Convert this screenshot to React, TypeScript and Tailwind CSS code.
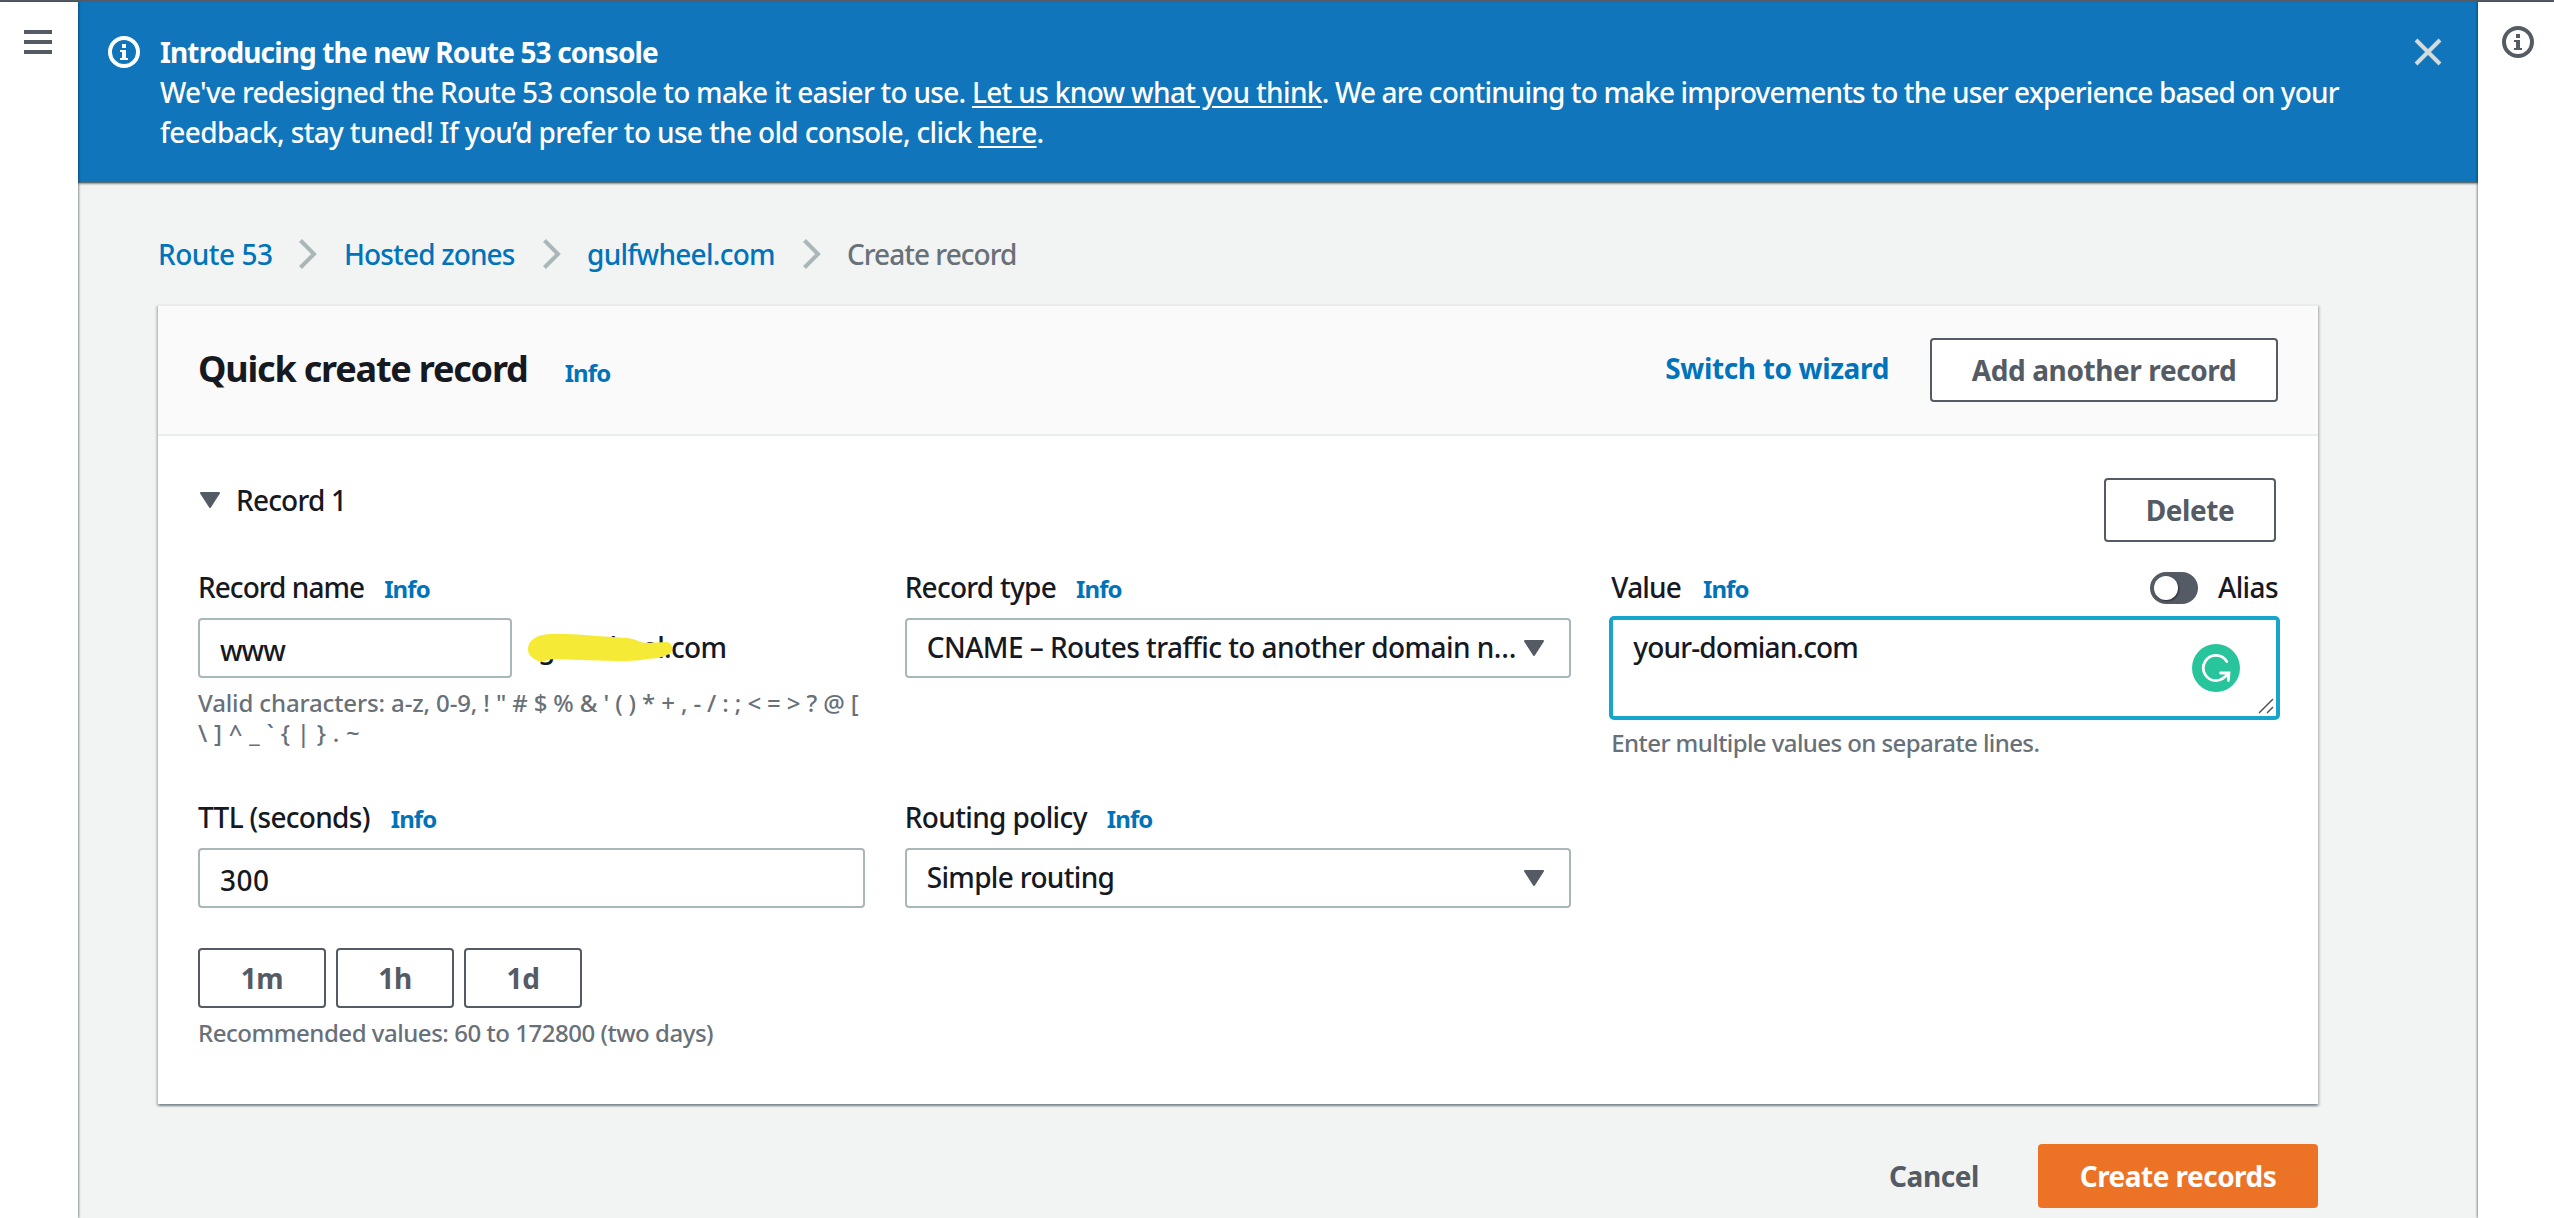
import React from "react";

function InfoIcon({ className }: { className: string }) {
  return (
    <svg viewBox="0 0 32 32" className={className} fill="none">
      <circle cx="16" cy="16" r="14" stroke="currentColor" strokeWidth="4" />
      <path d="M14 8h4v4h-4zM12 14h6v8h2v2h-8v-2h2v-6h-2z" fill="currentColor" />
    </svg>
  );
}

function Caret({ className = "" }: { className?: string }) {
  return (
    <svg viewBox="0 0 20 16" className={`h-4 w-5 shrink-0 text-[#545b64] ${className}`}>
      <path d="M1 1h18l-9 14z" fill="currentColor" stroke="currentColor" strokeWidth="2" strokeLinejoin="round" />
    </svg>
  );
}

function Chevron({ className }: { className: string }) {
  return (
    <svg viewBox="0 0 18 30" className={`h-[30px] w-[18px] shrink-0 ${className}`} fill="none">
      <path d="M1.5 1.5l13.500 13.500L1.500 28.500" stroke="#aab7b8" strokeWidth="4" />
    </svg>
  );
}

function Label({ text, className, info }: { text: string; className: string; info: string }) {
  return (
    <div className="flex h-10 items-baseline leading-10">
      <span className={`whitespace-nowrap ${className}`}>{text}</span>
      <a className={`text-[24px] font-bold tracking-[-0.9px] text-[#0073bb] ${info}`}>Info</a>
    </div>
  );
}

const field = "mt-[11px] flex h-[60px] items-center rounded-[4px] border-2 border-[#aab7b8] bg-white pl-5";
const hint = "mt-2.5 whitespace-nowrap text-[24px] leading-[30px] text-[#687078]";
const outline = "flex items-center justify-center rounded-[4px] border-2 border-[#545b64] bg-white font-bold tracking-[-0.4px] text-[#545b64]";

function Banner() {
  return (
    <div className="relative z-10 flex h-[180px] bg-[#1075bb] text-white shadow-[0_2px_2px_rgba(0,28,36,0.4),0_1px_1px_rgba(0,28,36,0.4)]">
      <InfoIcon className="ml-[30px] mt-[34px] size-8 shrink-0" />
      <div className="ml-5 mt-[30px] w-[2254px] whitespace-nowrap leading-10">
        <div className="font-bold tracking-[-0.86px]">Introducing the new Route 53 console</div>
        <div className="tracking-[-0.74px]">
          We've redesigned the Route 53 console to make it easier to use.{" "}
          <a className="tracking-[-0.66px] underline decoration-2 underline-offset-[3px]">Let us know what you think</a>
          <span className="tracking-[-0.86px]">. We are continuing to make improvements to the user experience based on your</span>
        </div>
        <div className="tracking-[-0.65px]">
          feedback, stay tuned! If you’d prefer to use the old console, click{" "}
          <a className="underline decoration-2 underline-offset-[3px]">here</a>.
        </div>
      </div>
      <svg viewBox="0 0 28 28" className="mt-[36px] size-7 text-[#d5dbdb]" fill="none">
        <path d="M2 2l24 24M26 2L2 26" stroke="currentColor" strokeWidth="4" />
      </svg>
    </div>
  );
}

function Breadcrumbs() {
  return (
    <nav className="mt-[51px] flex h-10 items-center whitespace-nowrap leading-10 text-[#0073bb]">
      <a className="mt-0.5 w-[141px] tracking-[-0.5px]">Route 53</a>
      <Chevron className="mt-0.5" />
      <a className="ml-[27px] mt-0.5 w-[199px] tracking-[-0.85px]">Hosted zones</a>
      <Chevron className="mt-0.5" />
      <a className="ml-[26px] mt-0.5 w-[216px] tracking-[-0.73px]">gulfwheel.com</a>
      <Chevron className="mt-0.5" />
      <span className="ml-[26px] mt-0.5 tracking-[-0.98px] text-[#687078]">Create record</span>
    </nav>
  );
}

function RecordName() {
  return (
    <div>
      <Label text="Record name" className="tracking-[-0.96px]" info="ml-5" />
      <div className="flex h-[71px]">
        <div className={`${field} w-[314px]`}>
          <span className="mt-1 tracking-[-1px]">www</span>
        </div>
        <div className="relative ml-[26px] mt-[11px] leading-[59px] tracking-[-0.7px]">
          gulfwheel.com
          <svg viewBox="0 0 146 28" className="absolute -left-2.5 top-4 h-7 w-[146px]">
            <path
              d="M22 0C36-.5 50 .5 62 1.500L99 4C108 5 111 8 117 9L139 8C146 10 146 19 139 21C133 24 127 24.500 119 25C109 27 100 27 89 27C76 27 64 26 52 26L25 25C20 25.500 17 28 10 27C4 24 0 21 0 15C0 7 8 .5 22 0Z"
              fill="#f5ea35"
            />
          </svg>
        </div>
      </div>
      <div className={hint}>
        <div className="tracking-[-0.13px]">{"Valid characters: a-z, 0-9, ! \" # $ % & ' ( ) * + , - / : ; < = > ? @ ["}</div>
        <div className="tracking-[0.28px]">{"\\ ] ^ _ ` { | } . ~"}</div>
      </div>
    </div>
  );
}

function ValueField() {
  return (
    <div>
      <div className="flex h-10 items-center justify-between">
        <Label text="Value" className="tracking-[-0.85px]" info="ml-[22px]" />
        <div className="flex items-center">
          <span className="mt-0.5 flex h-8 w-12 items-center rounded-full bg-[#545b64] pl-1">
            <span className="size-6 rounded-full bg-white shadow-[1px_1px_2px_rgba(0,0,0,0.5)]" />
          </span>
          <span className="ml-5 leading-10 tracking-[-0.6px]">Alias</span>
        </div>
      </div>
      <div className="relative mt-[11px] h-[100px] rounded-[3px] border-2 border-[#16a5cb] bg-white pl-5 pt-[7px] leading-10 tracking-[-0.85px] shadow-[0_0_0_2px_#16a5cb]">
        your-domian.com
        <svg viewBox="0 0 48 48" className="absolute right-[36px] top-6 size-12" fill="none">
          <circle cx="24" cy="24" r="24" fill="#28c49b" />
          <path
            d="M34.800 17.600A12.600 12.600 0 1 0 24 36.600C30 36.600 33 33 36.500 29.500M28.500 29H37l-.7 7.500"
            stroke="white"
            strokeWidth="2.800"
            strokeLinecap="round"
          />
        </svg>
        <svg viewBox="0 0 16 16" className="absolute bottom-0.5 right-0.5 size-4" fill="none">
          <path d="M1 15L15 1M9 15l6-6" stroke="#545454" strokeWidth="1.500" />
        </svg>
      </div>
      <div className={`${hint} tracking-[-0.58px]`}>Enter multiple values on separate lines.</div>
    </div>
  );
}

export default function App() {
  return (
    <div className="flex h-[1218px] w-[2554px] flex-col overflow-hidden bg-white font-['Noto_Sans','Open_Sans',sans-serif] text-[28px] font-medium text-[#16191f]">
      <div className="h-0.5 shrink-0 bg-[#545b64]" />
      <div className="flex grow">
        <aside className="z-20 w-[78px] shrink-0 bg-white shadow-[1px_0_2px_rgba(0,28,36,0.45)]">
          <div className="ml-6 mt-7 flex w-7 flex-col gap-1.5">
            <span className="h-1 bg-[#545b64]" />
            <span className="h-1 bg-[#545b64]" />
            <span className="h-1 bg-[#545b64]" />
          </div>
        </aside>
        <main className="w-[2400px] shrink-0 bg-[#f2f3f3]">
          <Banner />
          <div className="ml-20 w-[2160px]">
            <Breadcrumbs />
            <section className="mt-[31px] h-[800px] bg-white shadow-[0_2px_2px_rgba(0,28,36,0.3),2px_2px_2px_rgba(0,28,36,0.15),-2px_2px_2px_rgba(0,28,36,0.15)]">
              <header className="flex h-[132px] justify-between border-y-2 border-[#eaeded] bg-[#fafafa] px-10">
                <div className="mt-[43px] flex h-10 items-baseline leading-10">
                  <h1 className="text-[36px] font-bold tracking-[-1.2px]">Quick create record</h1>
                  <a className="ml-[37px] text-[24px] font-bold tracking-[-0.9px] text-[#0073bb]">Info</a>
                </div>
                <div className="flex">
                  <a className="mr-[41px] mt-[42px] font-bold leading-10 tracking-[-0.35px] text-[#0073bb]">Switch to wizard</a>
                  <button className={`${outline} mt-8 h-16 w-[348px]`}>Add another record</button>
                </div>
              </header>
              <div className="px-10 pt-[42px]">
                <div className="flex h-16 justify-between">
                  <div className="flex h-10 items-center">
                    <Caret className="ml-0.5 mt-1" />
                    <span className="ml-4 mt-1 leading-10 tracking-[-0.8px]">Record 1</span>
                  </div>
                  <button className={`${outline} mr-0.5 w-[172px]`}>Delete</button>
                </div>
                <div className="mt-[25px] grid grid-cols-3 gap-x-10 gap-y-[39px]">
                  <RecordName />
                  <div>
                    <Label text="Record type" className="tracking-[-0.74px]" info="ml-5" />
                    <div className={`${field} justify-between pr-[25px]`}>
                      <span className="mb-0.5 whitespace-nowrap tracking-[-0.56px]">CNAME – Routes traffic to another domain n…</span>
                      <Caret />
                    </div>
                  </div>
                  <ValueField />
                  <div>
                    <Label text="TTL (seconds)" className="tracking-[-0.7px]" info="ml-[21px]" />
                    <div className={field}>
                      <span className="mt-1 tracking-[0.5px]">300</span>
                    </div>
                    <div className="mt-10 flex h-[60px] gap-2.5">
                      <button className={`${outline} w-32`}>1m</button>
                      <button className={`${outline} w-[118px]`}>1h</button>
                      <button className={`${outline} w-[118px]`}>1d</button>
                    </div>
                    <div className={`${hint} tracking-[-0.47px]`}>Recommended values: 60 to 172800 (two days)</div>
                  </div>
                  <div>
                    <Label text="Routing policy" className="tracking-[-0.63px]" info="ml-5" />
                    <div className={`${field} justify-between pr-[25px]`}>
                      <span className="mb-0.5 tracking-[-0.66px]">Simple routing</span>
                      <Caret />
                    </div>
                  </div>
                </div>
              </div>
            </section>
            <footer className="mt-10 flex h-16 items-center justify-end font-bold">
              <a className="mr-[59px] tracking-[-0.42px] text-[#545b64]">Cancel</a>
              <button className="h-16 w-[280px] rounded-[4px] bg-[#ec7225] tracking-[-0.53px] text-white">Create records</button>
            </footer>
          </div>
        </main>
        <aside className="z-20 w-[76px] shrink-0 bg-white shadow-[-1px_0_2px_rgba(0,28,36,0.45)]">
          <InfoIcon className="ml-6 mt-6 size-8 text-[#545b64]" />
        </aside>
      </div>
    </div>
  );
}
